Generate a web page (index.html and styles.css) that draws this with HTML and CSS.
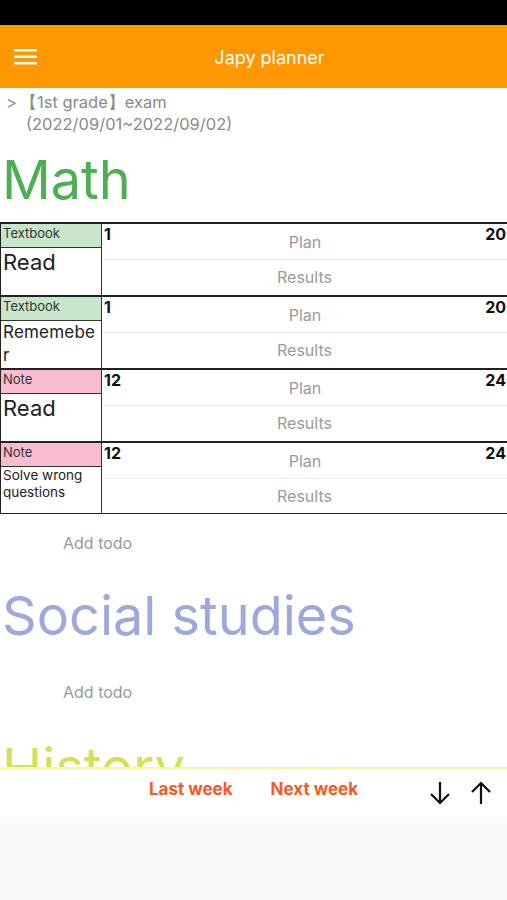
FILE: index.html
```html
<!DOCTYPE html>
<html>
<head>
<meta charset="utf-8">
<link rel="stylesheet" href="styles.css">
</head>
<body>
<div class="app">
  <div class="status"></div>
  <header class="header">
    <svg class="menu" width="24" height="18" viewBox="0 0 24 18"><rect x="0" y="1" width="23" height="2.4" fill="#fff"/><rect x="0" y="7.5" width="23" height="2.4" fill="#fff"/><rect x="0" y="14" width="23" height="2.4" fill="#fff"/></svg>
    <div class="title">Japy planner</div>
  </header>
  <main class="content">
    <div class="crumb">
      <div class="crumb-line"><span class="chev">&gt;</span><span>【1st grade】exam</span></div>
      <div class="crumb-sub">(2022/09/01~2022/09/02)</div>
    </div>
    <h1 class="subject math">Math</h1>
    <div class="table">
      <div class="row">
        <div class="left"><div class="tag green">Textbook</div><div class="task big">Read</div></div>
        <div class="right">
          <div class="plan"><span class="num">1</span><span class="lbl">Plan</span><span class="num end">20</span></div>
          <div class="results">Results</div>
        </div>
      </div>
      <div class="row">
        <div class="left"><div class="tag green">Textbook</div><div class="task mid">Rememeber</div></div>
        <div class="right">
          <div class="plan"><span class="num">1</span><span class="lbl">Plan</span><span class="num end">20</span></div>
          <div class="results">Results</div>
        </div>
      </div>
      <div class="row">
        <div class="left"><div class="tag pink">Note</div><div class="task big">Read</div></div>
        <div class="right">
          <div class="plan"><span class="num">12</span><span class="lbl">Plan</span><span class="num end">24</span></div>
          <div class="results">Results</div>
        </div>
      </div>
      <div class="row last">
        <div class="left"><div class="tag pink">Note</div><div class="task small">Solve wrong questions</div></div>
        <div class="right">
          <div class="plan"><span class="num">12</span><span class="lbl">Plan</span><span class="num end">24</span></div>
          <div class="results">Results</div>
        </div>
      </div>
    </div>
    <div class="add">Add todo</div>
    <h1 class="subject social">Social studies</h1>
    <div class="add add2">Add todo</div>
    <h1 class="subject history">History</h1>
  </main>
  <footer class="bottom">
    <div class="weeks">
      <span class="wk">Last week</span>
      <span class="wk">Next week</span>
    </div>
    <div class="arrows">
      <svg width="24" height="26" viewBox="0 0 24 26"><path d="M12 2 V23 M3 14 L12 23 L21 14" fill="none" stroke="#111" stroke-width="2.2"/></svg>
      <svg width="24" height="26" viewBox="0 0 24 26"><path d="M12 24 V3 M3 12 L12 3 L21 12" fill="none" stroke="#111" stroke-width="2.2"/></svg>
    </div>
  </footer>
  <div class="gray"></div>
</div>
</body>
</html>
```

FILE: styles.css
```css
* { box-sizing: border-box; }
html, body { margin: 0; padding: 0; }
body { font-family: "Inter", "Noto Sans", "Liberation Sans", sans-serif; background: #fff; }
.app { width: 507px; height: 900px; display: flex; flex-direction: column; overflow: hidden; }
.status { height: 25px; background: #000; flex: none; }
.header { height: 63px; background: #ff9800; flex: none; display: flex; align-items: center; padding-left: 14px; }
.menu { flex: none; }
.title { flex: 1; text-align: center; color: #fff; font-size: 18px; padding-right: 6px; margin-top: 1px; }
.content { flex: 1; overflow: hidden; min-height: 0; }
.crumb { color: #8a8a8a; font-size: 16.5px; line-height: 22px; padding: 3px 0 0 6px; }
.crumb-line { display: flex; }
.chev { width: 14px; }
.crumb-sub { padding-left: 20px; }
.subject { margin: 0; font-weight: 400; font-size: 54px; line-height: 60px; padding-left: 2px; }
.math { color: #4caf50; margin-top: 15px; margin-bottom: 12px; }
.social { color: #9fa8da; margin-top: 32px; }
.history { color: #d4e157; margin-top: 35px; }
.table { border-left: 1.5px solid #222; }
.row { display: grid; grid-template-columns: 101px 1fr; height: 73px; border-top: 2px solid #222; }
.row.last { border-bottom: 1.5px solid #222; height: 73px; }
.left { border-right: 1.5px solid #333; display: flex; flex-direction: column; }
.tag { height: 24px; border-bottom: 1.5px solid #333; font-size: 13px; line-height: 19px; padding-left: 2px; color: #333; }
.green { background: #c8e6c9; }
.pink { background: #f8bbd0; }
.task { color: #222; padding-left: 2px; }
.big { font-size: 22px; line-height: 29px; }
.mid { font-size: 17px; line-height: 23px; word-break: break-all; letter-spacing: 0.2px; }
.small { font-size: 13.5px; line-height: 17px; }
.right { display: flex; flex-direction: column; }
.plan { height: 36px; border-bottom: 1px solid #eaeaea; display: grid; grid-template-columns: 1fr auto 1fr; align-items: start; padding: 0 1px 0 2px; }
.num { font-weight: 700; font-size: 16px; color: #111; line-height: 21px; }
.end { justify-self: end; }
.lbl { color: #9a9a9a; font-size: 16px; line-height: 20px; padding-top: 8px; }
.results { text-align: center; color: #9a9a9a; font-size: 16px; line-height: 20px; padding-top: 7px; }
.add { color: #9a9a9a; font-size: 16px; padding-left: 63px; margin-top: 18px; line-height: 22px; }
.add2 { margin-top: 35px; }
.bottom { height: 50px; flex: none; border-top: 2px solid #fff59d; background: #fff; display: grid; grid-template-columns: 1fr auto 1fr; align-items: center; }
.weeks { grid-column: 2; display: flex; gap: 38px; margin-top: -8px; }
.wk { color: #ff5722; font-weight: 700; font-size: 17px; }
.arrows { grid-column: 3; justify-self: end; display: flex; gap: 17px; padding-right: 14px; }
.gray { flex: none; height: 83px; background: #fafafa; }
```
